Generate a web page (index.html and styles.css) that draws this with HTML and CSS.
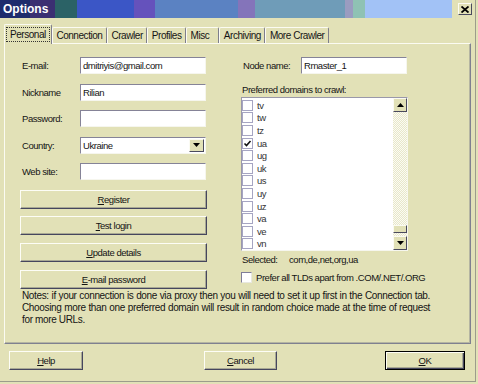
FILE: index.html
```html
<!DOCTYPE html>
<html lang="en">
<head>
    <meta charset="UTF-8">
    <title>Options</title>
    <link rel="stylesheet" href="styles.css">
</head>
<body>
<div class="dialog">
    <div class="titlebar">
        <div class="caption">Options</div>
        <div class="close">
            <svg width="8" height="7" viewBox="0 0 8 7"><path d="M0.5 0.5 L7.5 6.5 M7.5 0.5 L0.5 6.5" stroke="#000" stroke-width="1.8"/></svg>
        </div>
    </div>

    <div class="tabs">
        <div class="tab active"><span class="focus">Personal</span></div>
        <div class="tab">Connection</div>
        <div class="tab">Crawler</div>
        <div class="tab">Profiles</div>
        <div class="tab misc">Misc</div>
        <div class="tab">Archiving</div>
        <div class="tab">More Crawler</div>
    </div>

    <div class="panel">
        <div class="columns">
            <div class="left">
                <div class="field"><label>E-mail:</label><div class="input">dmitriyis@gmail.com</div></div>
                <div class="field"><label>Nickname</label><div class="input">Rilian</div></div>
                <div class="field"><label>Password:</label><div class="input"></div></div>
                <div class="field"><label>Country:</label>
                    <div class="input select"><span>Ukraine</span>
                        <span class="drop"><svg width="7" height="4" viewBox="0 0 7 4"><path d="M0 0 H7 L3.5 4 Z" fill="#000"/></svg></span>
                    </div>
                </div>
                <div class="field"><label>Web site:</label><div class="input"></div></div>

                <div class="buttons">
                    <div class="btn"><u>R</u>egister</div>
                    <div class="btn"><u>T</u>est login</div>
                    <div class="btn"><u>U</u>pdate details</div>
                    <div class="btn"><u>E</u>-mail password</div>
                </div>
            </div>

            <div class="right">
                <div class="field node"><label>Node name:</label><div class="input">Rmaster_1</div></div>
                <div class="prompt">Preferred domains to crawl:</div>
                <div class="listbox">
                    <div class="items">
                        <div class="item"><span class="cb"></span>tv</div>
                        <div class="item"><span class="cb"></span>tw</div>
                        <div class="item"><span class="cb"></span>tz</div>
                        <div class="item"><span class="cb"><svg width="9" height="9" viewBox="0 0 9 9"><path d="M1.5 4.5 L3.5 6.5 L7.5 2" stroke="#111" stroke-width="1.6" fill="none"/></svg></span>ua</div>
                        <div class="item"><span class="cb"></span>ug</div>
                        <div class="item"><span class="cb"></span>uk</div>
                        <div class="item"><span class="cb"></span>us</div>
                        <div class="item"><span class="cb"></span>uy</div>
                        <div class="item"><span class="cb"></span>uz</div>
                        <div class="item"><span class="cb"></span>va</div>
                        <div class="item"><span class="cb"></span>ve</div>
                        <div class="item"><span class="cb"></span>vn</div>
                    </div>
                    <div class="scrollbar">
                        <div class="sb-btn"><svg width="7" height="4" viewBox="0 0 7 4"><path d="M0 4 H7 L3.5 0 Z" fill="#000"/></svg></div>
                        <div class="track"><div class="thumb"></div></div>
                        <div class="sb-btn"><svg width="7" height="4" viewBox="0 0 7 4"><path d="M0 0 H7 L3.5 4 Z" fill="#000"/></svg></div>
                    </div>
                </div>
                <div class="selected"><span class="sel-label">Selected:</span><span>com,de,net,org,ua</span></div>
                <div class="check-row"><span class="cb sunken"></span>Prefer all TLDs apart from .COM/.NET/.ORG</div>
            </div>
        </div>

        <p class="notes">Notes: if your connection is done via proxy then you will need to set it up first in the Connection tab. Choosing more than one preferred domain will result in random choice made at the time of request for more URLs.</p>
    </div>

    <div class="footer">
        <div class="btn help"><u>H</u>elp</div>
        <div class="btn cancel"><u>C</u>ancel</div>
        <div class="btn ok"><u>O</u>K</div>
    </div>
</div>
</body>
</html>
```

FILE: styles.css
```css
body {
    margin: 0;
    background: #e2e1b7;
    font-family: "Liberation Sans", Arial, sans-serif;
    font-size: 9.5px;
    letter-spacing: -0.45px;
    color: #141414;
}

.dialog {
    width: 475px;
    height: 381px;
    border-right: 1px solid #9c9c8c;
    border-bottom: 1px solid #9c9c8c;
}

/* title bar */
.titlebar {
    display: flex;
    align-items: center;
    height: 18px;
}
.caption {
    width: 449px;
    height: 18px;
    padding-left: 3px;
    line-height: 18px;
    color: #fff;
    font-weight: bold;
    font-size: 12px;
    letter-spacing: 0;
    background: linear-gradient(to right,
        #1e2c6c 0 30px, #3b2f72 30px 55px, #2b6266 55px 77px,
        #3b56c6 77px 134px, #6552bc 134px 155px, #5b82c2 155px 238px,
        #8474ba 238px 255px, #6f9cb8 255px 345px, #9a9cc0 345px 353px,
        #8fc2b4 353px 365px, #a2c2f6 365px);
}
.close {
    display: flex;
    align-items: center;
    justify-content: center;
    width: 14px;
    height: 12px;
    margin-left: 6px;
    box-sizing: border-box;
    background: #e2e1b7;
    border: 1px solid;
    border-color: #fbfbf2 #4a4a5e #4a4a5e #fbfbf2;
}

/* tabs */
.tabs {
    display: flex;
    align-items: flex-end;
    height: 25px;
    padding-left: 4px;
}
.tab {
    height: 16px;
    padding: 0 3.5px;
    box-sizing: border-box;
    line-height: 15px;
    font-size: 10px;
    border-top: 1px solid #fbfbf2;
    border-left: 1px solid #fbfbf2;
    border-right: 1px solid #7e7e8c;
    border-radius: 2px 2px 0 0;
}
.tab.misc {
    padding-right: 9px;
}
.tab.active {
    position: relative;
    height: 20px;
    margin-bottom: -1px;
    padding: 2px 2px 0;
    background: #e2e1b7;
    z-index: 1;
}
.focus {
    display: inline-block;
    padding: 0 3px;
    line-height: 13px;
    outline: 1px dotted #333;
}

/* page */
.panel {
    width: 467px;
    height: 301px;
    margin-left: 4px;
    padding: 13px 0 0 15px;
    box-sizing: border-box;
    border: 1px solid;
    border-color: #fbfbf2 #7f8090 #7f8090 #fbfbf2;
    box-shadow: inset -1px -1px #b5b5a2;
}
.columns {
    display: grid;
    grid-template-columns: 187px 167px;
    column-gap: 34px;
}

.field {
    display: flex;
    align-items: center;
    height: 17px;
    margin-bottom: 9.5px;
}
.field label {
    width: 60px;
    padding-left: 2px;
    box-sizing: border-box;
}
.input {
    width: 126px;
    height: 17px;
    padding-left: 2px;
    box-sizing: border-box;
    line-height: 15px;
    background: #fff;
    border: 1px solid;
    border-color: #858397 #f6f6ee #f6f6ee #858397;
}
.node .input {
    width: 106px;
}
.select {
    display: flex;
    justify-content: space-between;
    padding-right: 1px;
}
.drop {
    display: flex;
    align-items: center;
    justify-content: center;
    width: 15px;
    height: 13px;
    margin-top: 1px;
    box-sizing: border-box;
    background: #e2e1b7;
    border: 1px solid;
    border-color: #fbfbf2 #4a4a5e #4a4a5e #fbfbf2;
}

.buttons {
    display: flex;
    flex-direction: column;
    gap: 7.7px;
    margin-top: 1.5px;
}
.btn {
    height: 19px;
    box-sizing: border-box;
    line-height: 17px;
    text-align: center;
    border: 1px solid;
    border-color: #fdfdf6 #46465e #46465e #fdfdf6;
    box-shadow: inset -1px -1px #a9a994;
}

/* domains list */
.prompt {
    line-height: 12px;
    padding-left: 1px;
}
.listbox {
    display: flex;
    height: 154px;
    margin-top: 1.5px;
    box-sizing: border-box;
    background: #fff;
    border: 1px solid;
    border-color: #9a98aa #f6f6ee #f6f6ee #9a98aa;
}
.items {
    flex: 1;
    padding-top: 1px;
}
.item {
    display: flex;
    align-items: center;
    gap: 4px;
    height: 12.6px;
    color: #333;
}
.cb {
    display: flex;
    align-items: center;
    justify-content: center;
    flex: none;
    width: 11px;
    height: 11px;
    box-sizing: border-box;
    background: #fff;
    border: 1px solid #a6a5c2;
}
.scrollbar {
    display: flex;
    flex-direction: column;
    width: 14px;
    background: repeating-conic-gradient(#fbfbf4 0 25%, #e8e7c9 0 50%) 0 0 / 2px 2px;
}
.sb-btn {
    display: flex;
    align-items: center;
    justify-content: center;
    height: 14px;
    box-sizing: border-box;
    background: #e2e1b7;
    border: 1px solid;
    border-color: #fbfbf2 #4a4a5e #4a4a5e #fbfbf2;
}
.track {
    flex: 1;
    display: flex;
    flex-direction: column;
}
.thumb {
    height: 8px;
    margin-top: auto;
    margin-bottom: 3px;
    box-sizing: border-box;
    background: #e2e1b7;
    border: 1px solid;
    border-color: #fbfbf2 #4a4a5e #4a4a5e #fbfbf2;
}

.selected {
    display: flex;
    margin-top: 3px;
    line-height: 12px;
    padding-left: 1px;
}
.sel-label {
    width: 47px;
}
.check-row {
    display: flex;
    align-items: center;
    gap: 4px;
    height: 12px;
    margin-top: 5px;
    white-space: nowrap;
}
.cb.sunken {
    border-color: #7f7d98 #e8e8e0 #e8e8e0 #7f7d98;
}

.notes {
    width: 408px;
    margin: 1px 0 0 2px;
    font-size: 10px;
    letter-spacing: -0.35px;
    line-height: 12px;
    text-align: justify;
}

/* dialog buttons */
.footer {
    display: flex;
    padding: 7px 0 0 9px;
}
.help {
    width: 74px;
}
.cancel {
    width: 73px;
    margin-left: 121px;
}
.ok {
    width: 80px;
    margin-left: 108px;
    border-color: #000;
    box-shadow: inset 1px 1px #fdfdf6, inset -1px -1px #46465e, inset -2px -2px #a9a994;
}
```
